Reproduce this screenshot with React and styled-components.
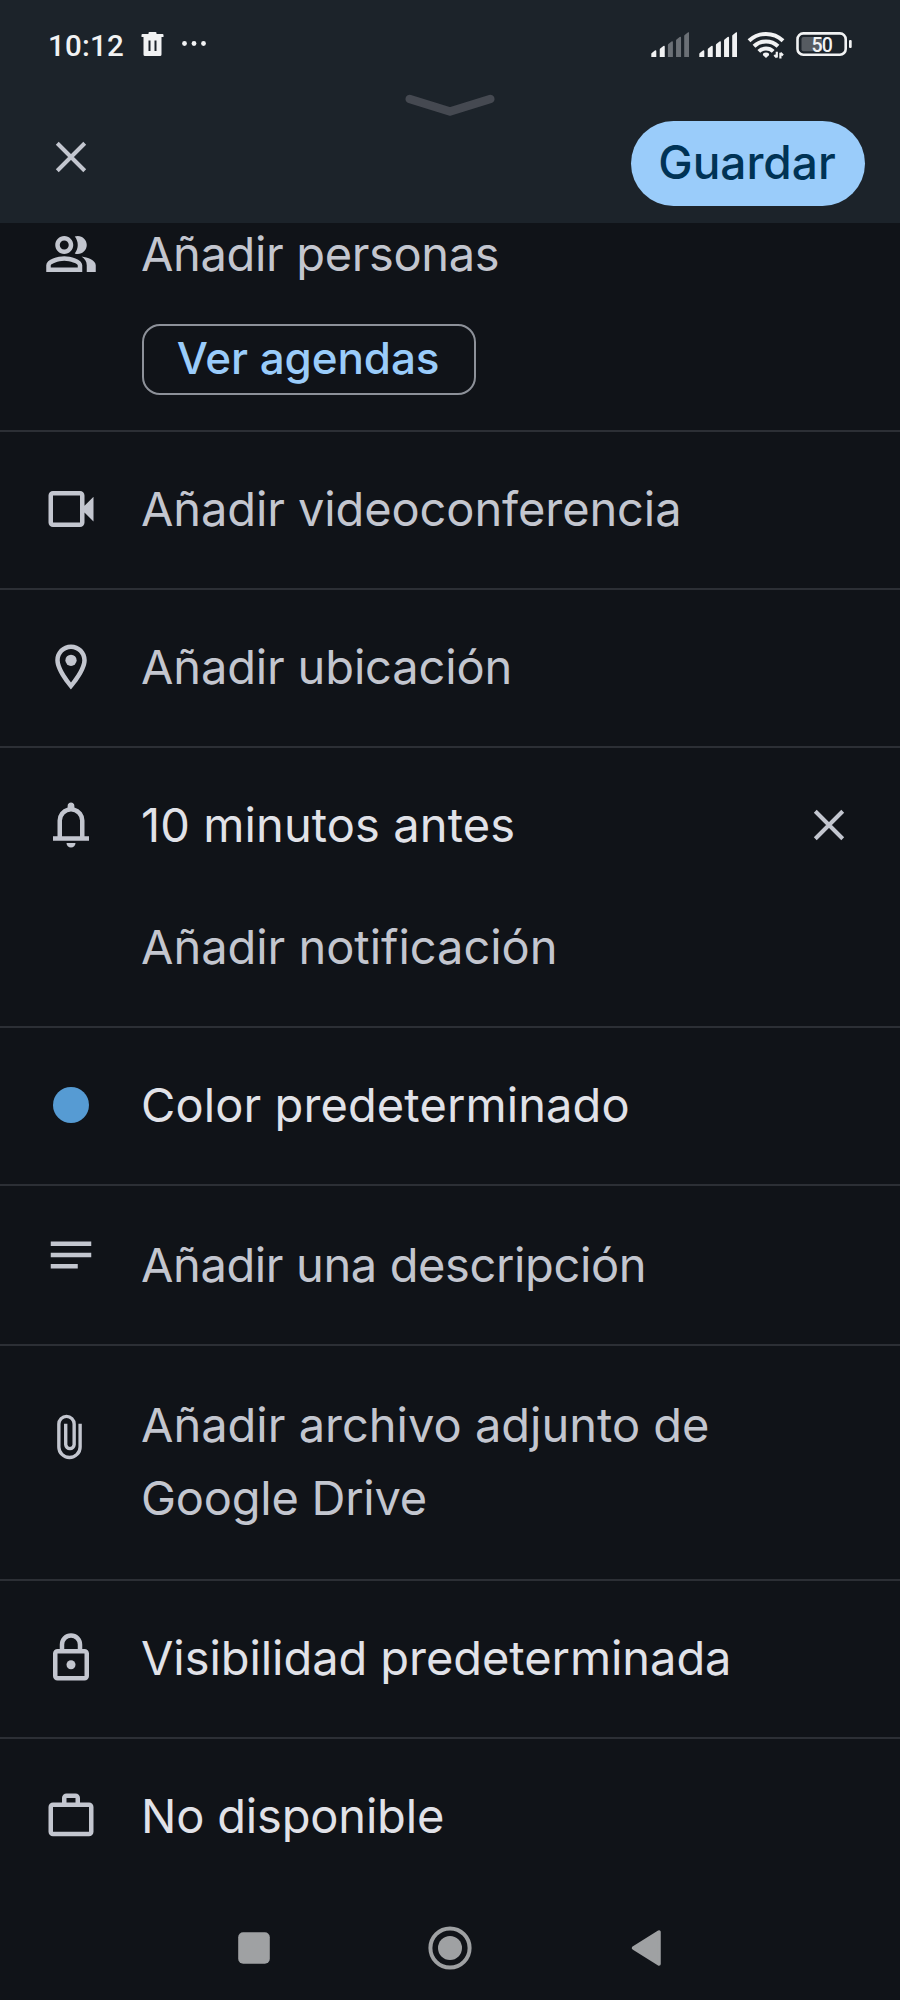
import styled, { createGlobalStyle } from "styled-components"

const GlobalStyle = createGlobalStyle`
  * {
    box-sizing: border-box;
  }
  body {
    margin: 0;
    background: #101318;
  }
`

const Screen = styled.div`
  display: flex;
  flex-direction: column;
  width: 900px;
  height: 2000px;
  overflow: hidden;
  background: #101318;
  color: #c3c6cf;
  font-family: Inter, "Noto Sans", sans-serif;
`

const Header = styled.header`
  display: flex;
  flex-direction: column;
  height: 223px;
  flex-shrink: 0;
  background: #1c232a;
`

const StatusBar = styled.div`
  display: flex;
  align-items: center;
  justify-content: space-between;
  height: 88px;
  padding: 0 48px;
  color: #f1f2f3;
`

const StatusGroup = styled.div`
  display: flex;
  align-items: center;
  gap: ${({ $gap }) => $gap}px;
`

const Clock = styled.span`
  width: 76px;
  padding-top: 5px;
  font-family: Roboto, sans-serif;
  font-size: 29.5px;
  font-weight: 500;
  letter-spacing: 0.2px;
  line-height: 35px;
  white-space: nowrap;
`

const Grip = styled.div`
  display: flex;
  align-items: flex-end;
  justify-content: center;
  height: 28px;
`

const Toolbar = styled.div`
  display: flex;
  align-items: flex-start;
  justify-content: space-between;
  padding: 5px 35px 0 44px;
`

const IconButton = styled.button`
  display: flex;
  padding: 0;
  margin-top: ${({ $top }) => $top}px;
  border: none;
  background: none;
  color: inherit;
`

const SaveButton = styled.button`
  width: 234px;
  height: 85px;
  padding: 0 2px 3px 0;
  border: none;
  border-radius: 43px;
  background: #9accfa;
  color: #003355;
  font-family: inherit;
  font-size: 46px;
  font-weight: 500;
`

const List = styled.main`
  display: flex;
  flex-direction: column;
  flex: 1;
`

const Row = styled.section`
  display: flex;
  align-items: flex-start;
  height: ${({ $height }) => $height}px;
  padding: 0 44px;
  border-bottom: 2px solid ${({ $last }) => ($last ? "transparent" : "#2c2f35")};
`

const IconSlot = styled.div`
  display: flex;
  align-items: center;
  justify-content: center;
  width: 54px;
  height: 54px;
  margin-top: ${({ $top }) => $top}px;
  margin-right: 43px;
`

const RowBody = styled.div`
  display: flex;
  flex-direction: column;
  align-items: flex-start;
  flex: 1;
  padding-top: ${({ $top }) => $top}px;
`

const Label = styled.p`
  margin: 0;
  color: ${({ $active }) => ($active ? "#e1e2e8" : "#c3c6cf")};
  font-size: 47px;
  letter-spacing: ${({ $spacing }) => $spacing || 0}px;
  line-height: ${({ $line }) => $line || 74}px;
  white-space: nowrap;
`

const SubLabel = styled(Label)`
  margin-top: 48px;
`

const Chip = styled.button`
  width: 334px;
  height: 71px;
  margin: 39px 0 0 1px;
  padding: 0 2px 3px 0;
  border: 2px solid #8d9199;
  border-radius: 18px;
  background: none;
  color: #9accfa;
  font-family: inherit;
  font-size: 44px;
  font-weight: 500;
  letter-spacing: -0.1px;
  white-space: nowrap;
`

const ColorDot = styled.span`
  width: 36px;
  height: 36px;
  border-radius: 50%;
  background: #569bd3;
`

const NavBar = styled.nav`
  display: flex;
  align-items: center;
  justify-content: center;
  gap: 152px;
  height: 105px;
  padding-bottom: 3px;
  flex-shrink: 0;
  color: #9fa1a3;
`

const Icon = ({ children }) => (
  <svg width="54" height="54" viewBox="0 0 24 24" fill="currentColor">
    {children}
  </svg>
)

const CloseIcon = () => (
  <Icon>
    <path d="M5.9 5.9 18.1 18.1M18.1 5.9 5.9 18.1" stroke="currentColor" strokeWidth="1.8" />
  </Icon>
)

const PeopleIcon = () => (
  <Icon>
    <path d="M16.67 13.13C18.04 14.06 19 15.32 19 17v3h4v-3c0-2.18-3.57-3.47-6.33-3.87z" />
    <path d="M15 12c2.21 0 4-1.79 4-4s-1.79-4-4-4c-.47 0-.91.1-1.33.24C14.5 5.27 15 6.58 15 8s-.5 2.73-1.33 3.76c.42.14.86.24 1.33.24z" />
    <path d="M9 12c2.21 0 4-1.79 4-4s-1.79-4-4-4-4 1.79-4 4 1.79 4 4 4zm0-6c1.1 0 2 .9 2 2s-.9 2-2 2-2-.9-2-2 .9-2 2-2z" />
    <path d="M9 13c-2.67 0-8 1.34-8 4v3h16v-3c0-2.66-5.33-4-8-4zm6 5H3v-.99C3.2 16.29 6.3 15 9 15s5.8 1.28 6 2v1z" />
  </Icon>
)

const VideoIcon = () => (
  <Icon>
    <path d="M4 20q-.825 0-1.4125-.5875T2 18V6q0-.825.5875-1.4125T4 4h12q.825 0 1.4125.5875T18 6v4.5l4-4v11l-4-4V18q0 .825-.5875 1.4125T16 20H4zm0-2h12V6H4v12z" />
  </Icon>
)

const PlaceIcon = () => (
  <Icon>
    <path d="M12 2C8.13 2 5 5.13 5 9c0 5.25 7 13 7 13s7-7.75 7-13c0-3.87-3.13-7-7-7zM7 9c0-2.76 2.24-5 5-5s5 2.24 5 5c0 2.88-2.88 7.19-5 9.88C9.92 16.21 7 11.85 7 9z" />
    <circle cx="12" cy="9" r="2.5" />
  </Icon>
)

const BellIcon = () => (
  <Icon>
    <path d="M4 19v-2h2v-7q0-2.075 1.25-3.6875T10.5 4.2v-.7q0-.625.4375-1.0625T12 2q.625 0 1.0625.4375T13.5 3.5v.7q2 .5 3.25 2.1125T18 10v7h2v2H4zm8 3q-.825 0-1.4125-.5875T10 20h4q0 .825-.5875 1.4125T12 22zm-4-5h8v-7q0-1.65-1.175-2.825T12 6q-1.65 0-2.825 1.175T8 10v7z" />
  </Icon>
)

const NotesIcon = () => (
  <Icon>
    <path d="M3 6h18v2H3zM3 11h18v2H3zM3 16h12v2H3z" />
  </Icon>
)

const ClipIcon = () => (
  <Icon>
    <path
      d="M16.05 6.1V16.4A4.72 4.72 0 0 1 6.6 16.4V6.25A3.4 3.4 0 0 1 13.4 6.25V15.4A1.88 1.88 0 0 1 9.65 15.4V6.1"
      fill="none"
      stroke="currentColor"
      strokeWidth="1.5"
    />
  </Icon>
)

const LockIcon = () => (
  <Icon>
    <path d="M6 22q-.825 0-1.4125-.5875T4 20V10q0-.825.5875-1.4125T6 8h1V6q0-2.075 1.4625-3.5375T12 1q2.075 0 3.5375 1.4625T17 6v2h1q.825 0 1.4125.5875T20 10v10q0 .825-.5875 1.4125T18 22H6zm0-2h12V10H6v10zM9 8h6V6q0-1.25-.875-2.125T12 3q-1.25 0-2.125.875T9 6v2z" />
    <circle cx="12" cy="15" r="2" />
  </Icon>
)

const WorkIcon = () => (
  <Icon>
    <path d="M4 21q-.825 0-1.4125-.5875T2 19V8q0-.825.5875-1.4125T4 6h4V4q0-.825.5875-1.4125T10 2h4q.825 0 1.4125.5875T16 4v2h4q.825 0 1.4125.5875T22 8v11q0 .825-.5875 1.4125T20 21H4zm0-2h16V8H4v11zm6-13h4V4h-4v2z" />
  </Icon>
)

const TrashIcon = () => (
  <svg width="23" height="24" viewBox="0 0 23 24" fill="currentColor">
    <path
      fillRule="evenodd"
      d="M7.5 1q0-1 1-1h6q1 0 1 1v1h6q1 0 1 1v2h-2v17.5q0 1.5-1.5 1.5H4q-1.5 0-1.5-1.5V5h-2V3q0-1 1-1h6zM7.5 8.500v10.500h2V8.500zM13.500 8.500v10.500h2V8.500z"
    />
  </svg>
)

const MoreIcon = () => (
  <svg width="26" height="8" viewBox="0 0 26 8" fill="currentColor">
    <circle cx="3.5" cy="3.5" r="2.4" />
    <circle cx="13" cy="3.5" r="2.4" />
    <circle cx="22.5" cy="3.5" r="2.4" />
  </svg>
)

const barTops = [18, 13.5, 9, 4.5, 0]

const SignalIcon = ({ level }) => (
  <svg width="38" height="25" viewBox="0 0 38 25">
    {barTops.map((top, i) => {
      const x = i === 0 ? 0.3 : i * 8.15 + 0.6
      return (
        <path
          key={top}
          d={`M${x} 25V${top + 4}q0-.8.8-1.3L${x + 3.6} ${top + 0.4}q1.4-.8 1.4.8V25z`}
          fill={i < level ? "#f1f2f3" : "#6b7076"}
        />
      )
    })}
  </svg>
)

const WifiIcon = () => (
  <svg width="39" height="29" viewBox="0 0 39 29" fill="none" stroke="currentColor" strokeWidth="4">
    <path d="M2 10.8a24.5 24.5 0 0 1 34 0" />
    <path d="M7 16.3a17.3 17.3 0 0 1 24 0" />
    <path d="M11.8 21.4a10.4 10.4 0 0 1 14.400 0" />
    <path d="M19 28l-3-2.7q-.6-2.8 3-2.8t3 2.8z" fill="currentColor" stroke="none" />
    <path d="M29.800 21.800v5.800M27.300 25l2.500 2.600M33.400 28.600v-5.800M36 25.400l-2.600-2.600" strokeWidth="2.200" />
  </svg>
)

const BatteryText = styled.text`
  fill: #f1f2f3;
  font-family: Roboto, sans-serif;
  font-size: 19.5px;
  font-weight: 500;
  letter-spacing: -0.8px;
`

const BatteryIcon = () => (
  <svg width="56" height="24" viewBox="0 0 56 24">
    <rect x="5.5" y="5" width="20.5" height="14.3" rx="2" fill="#565b61" />
    <rect x="1.5" y="1.4" width="48.2" height="21.3" rx="5.8" fill="none" stroke="#f1f2f3" strokeWidth="2.6" />
    <rect x="53" y="8" width="2.7" height="8" rx="1" fill="#f1f2f3" />
    <BatteryText x="15.4" y="19.8">50</BatteryText>
  </svg>
)

const rows = [
  { icon: <VideoIcon />, text: "Añadir videoconferencia", spacing: -0.1 },
  { icon: <PlaceIcon />, text: "Añadir ubicación", spacing: -0.15 },
  {
    icon: <BellIcon />,
    text: "10 minutos antes",
    active: true,
    spacing: 0.1,
    height: 280,
    sub: "Añadir notificación",
    removable: true,
  },
  { icon: <ColorDot />, text: "Color predeterminado", active: true, spacing: 0.1 },
  { icon: <NotesIcon />, text: "Añadir una descripción", spacing: -0.38, height: 160, top: 42, iconTop: 42 },
  {
    icon: <ClipIcon />,
    text: "Añadir archivo adjunto de",
    secondLine: "Google Drive",
    spacing: 0,
    line: 73,
    height: 235,
    top: 42,
    iconTop: 64,
  },
  { icon: <LockIcon />, text: "Visibilidad predeterminada", active: true, spacing: -0.06 },
  { icon: <WorkIcon />, text: "No disponible", active: true, spacing: -0.18, last: true },
]

export default function App() {
  return (
    <Screen>
      <GlobalStyle />
      <Header>
        <StatusBar>
          <StatusGroup $gap={17}>
            <Clock>10:12</Clock>
            <TrashIcon />
            <MoreIcon />
          </StatusGroup>
          <StatusGroup $gap={10}>
            <SignalIcon level={2} />
            <SignalIcon level={5} />
            <WifiIcon />
            <BatteryIcon />
          </StatusGroup>
        </StatusBar>
        <Grip>
          <svg width="92" height="24" viewBox="0 0 92 24" fill="none">
            <path d="M5.7 7 46 19.5 86.3 7" stroke="#454951" strokeWidth="8.5" strokeLinecap="round" strokeLinejoin="round" />
          </svg>
        </Grip>
        <Toolbar>
          <IconButton aria-label="Cerrar" $top={8.5}>
            <CloseIcon />
          </IconButton>
          <SaveButton>Guardar</SaveButton>
        </Toolbar>
      </Header>
      <List>
        <Row $height={209}>
          <IconSlot $top={3.5}>
            <PeopleIcon />
          </IconSlot>
          <RowBody $top={0}>
            <Label $line={62} $spacing={-0.35}>Añadir personas</Label>
            <Chip>Ver agendas</Chip>
          </RowBody>
        </Row>
        {rows.map((row) => (
          <Row key={row.text} $height={row.height || 158} $last={row.last}>
            <IconSlot $top={row.iconTop || 50}>{row.icon}</IconSlot>
            <RowBody $top={row.top || 40}>
              <Label $active={row.active} $spacing={row.spacing} $line={row.line}>
                {row.text}
              </Label>
              {row.secondLine && (
                <Label $spacing={-0.25} $line={row.line}>{row.secondLine}</Label>
              )}
              {row.sub && <SubLabel $spacing={-0.03}>{row.sub}</SubLabel>}
            </RowBody>
            {row.removable && (
              <IconButton aria-label="Quitar" $top={50}>
                <CloseIcon />
              </IconButton>
            )}
          </Row>
        ))}
      </List>
      <NavBar>
        <svg width="44" height="44" viewBox="0 0 44 44" fill="currentColor">
          <rect x="6.2" y="6.2" width="31.6" height="31.6" rx="5" />
        </svg>
        <svg width="44" height="44" viewBox="0 0 44 44" fill="currentColor">
          <circle cx="22" cy="22" r="19.6" fill="none" stroke="currentColor" strokeWidth="4" />
          <circle cx="22" cy="22" r="12" />
        </svg>
        <svg width="44" height="44" viewBox="0 0 44 44" fill="currentColor">
          <path d="M9.5 22 35 6v32z" stroke="currentColor" strokeWidth="3.5" strokeLinejoin="round" />
        </svg>
      </NavBar>
    </Screen>
  )
}
